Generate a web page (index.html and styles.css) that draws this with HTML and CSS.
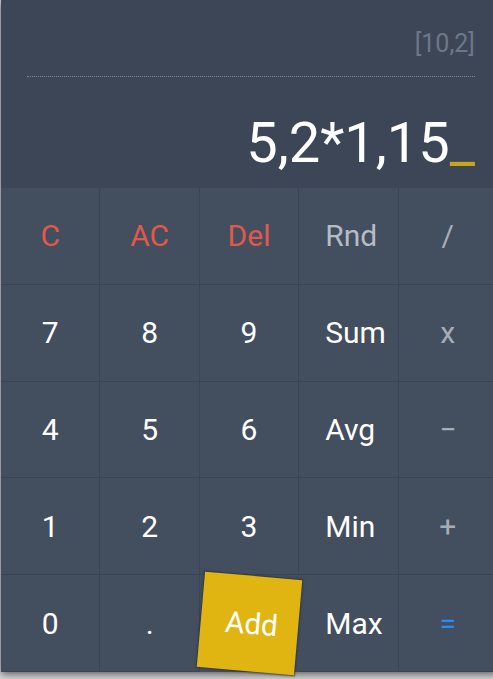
FILE: index.html
```html
<!DOCTYPE html>
<html lang="en">
<head>
<meta charset="utf-8">
<title>Calculator</title>
<link rel="stylesheet" href="styles.css">
</head>
<body>
<div class="calc">
  <div class="display">
    <div class="memory">[10,2]</div>
    <div class="divider"></div>
    <div class="expr">5,2*1,15<span class="cursor">_</span></div>
  </div>
  <div class="keys">
    <button class="key red">C</button>
    <button class="key red">AC</button>
    <button class="key red">Del</button>
    <button class="key fn muted">Rnd</button>
    <button class="key op">/</button>

    <button class="key">7</button>
    <button class="key">8</button>
    <button class="key">9</button>
    <button class="key fn">Sum</button>
    <button class="key op">x</button>

    <button class="key">4</button>
    <button class="key">5</button>
    <button class="key">6</button>
    <button class="key fn">Avg</button>
    <button class="key op">−</button>

    <button class="key">1</button>
    <button class="key">2</button>
    <button class="key">3</button>
    <button class="key fn">Min</button>
    <button class="key op">+</button>

    <button class="key">0</button>
    <button class="key">.</button>
    <button class="key add">Add</button>
    <button class="key fn">Max</button>
    <button class="key eq">=</button>
  </div>
</div>
</body>
</html>
```
FILE: styles.css
```css
html, body {
  margin: 0;
  padding: 0;
  overflow: hidden;
  background: #d6d6d6;
}

body {
  font-family: Roboto, "Liberation Sans", sans-serif;
  width: 493px;
  height: 679px;
}

.calc {
  width: 497px;
  margin-left: 1px;
  background: #434e5f;
  box-shadow: 0 2px 8px rgba(0, 0, 0, 0.6);
}

.display {
  height: 188px;
  box-sizing: border-box;
  padding: 31px 23px 0 26px;
  background: #3c4656;
  display: flex;
  flex-direction: column;
}

.memory {
  text-align: right;
  font-size: 25px;
  line-height: 25px;
  color: #6c7889;
}

.divider {
  margin-top: 20px;
  border-top: 1px dotted #7e8896;
}

.expr {
  margin-top: 38px;
  text-align: right;
  font-size: 56px;
  line-height: 56px;
  color: #ffffff;
  white-space: nowrap;
}

.cursor {
  color: #c9a51e;
}

.keys {
  display: grid;
  grid-template-columns: repeat(5, 1fr);
  grid-template-rows: repeat(5, 1fr);
  height: 484px;
}

.key {
  margin: 0;
  padding: 0;
  border: none;
  border-right: 1px solid #3a4453;
  border-bottom: 1px solid #3a4453;
  background: #434e5f;
  color: #ffffff;
  font-family: Roboto, "Liberation Sans", sans-serif;
  font-size: 30px;
  font-weight: 400;
  display: flex;
  align-items: center;
  justify-content: center;
}

.fn {
  justify-content: flex-start;
  padding-left: 26px;
}

.red {
  color: #e0594b;
}

.muted {
  color: #b5bcc6;
}

.op {
  color: #a5adb8;
}

.eq {
  color: #2b8cef;
}

.add {
  position: relative;
  z-index: 1;
  background: #e0b512;
  border: none;
  padding-left: 4px;
  transform: rotate(5deg) scale(0.985);
  box-shadow: 0 0 2px 1px rgba(40, 48, 60, 0.7);
}
```
